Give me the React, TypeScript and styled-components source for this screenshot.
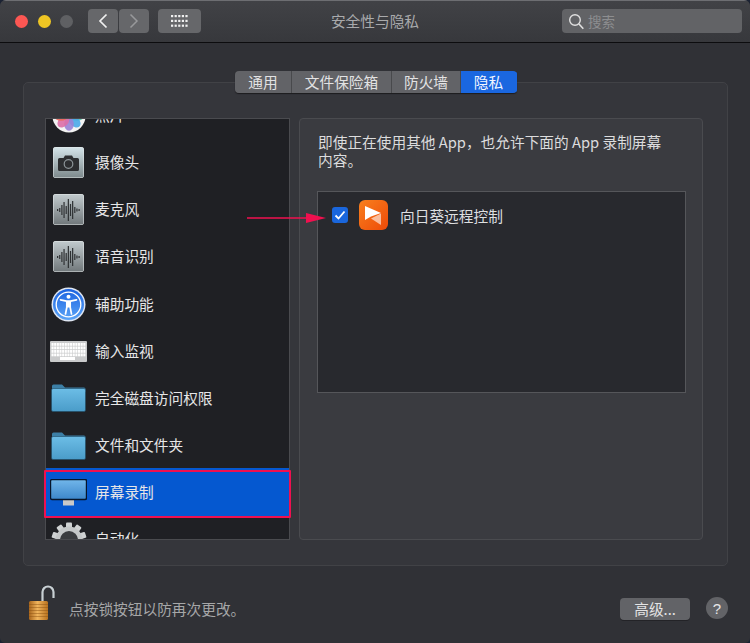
import React from 'react'
import styled, { createGlobalStyle } from 'styled-components'

const GlobalStyle = createGlobalStyle`
  html, body {
    margin: 0;
    background: #1b2233;
  }
  * {
    box-sizing: border-box;
  }
`

const font = `"Noto Sans CJK SC", "Noto Sans", "Liberation Sans", sans-serif`

const CameraIcon = () => (
  <svg width="21" height="16" viewBox="0 0 21 16">
    <path d="M1.5 3h4l1.5-2.500h7L15.500 3h4a1.500 1.500 0 0 1 1.500 1.500V14.500A1.500 1.500 0 0 1 19.500 16h-18A1.500 1.500 0 0 1 0 14.500V4.500A1.500 1.500 0 0 1 1.500 3z" fill="#2c2e30" />
    <circle cx="10.500" cy="9" r="4.300" fill="none" stroke="#8b9497" strokeWidth="1.200" />
  </svg>
)

const WaveIcon = () => {
  const bars = [1, 2, 5, 8, 4, 11, 6, 9, 3, 1.500, 1]
  return (
    <svg width="25" height="24" viewBox="0 0 25 24">
      {bars.map((h, i) => (
        <rect key={i} x={1 + i * 2.150} y={12 - h} width="1.200" height={h * 2} fill="#2e3133" />
      ))}
    </svg>
  )
}

const PhotosIcon = () => {
  const petals = ['#f5c242', '#a6d65a', '#53c6a8', '#4aa8e8', '#9a82d6', '#dd6fa8', '#ec6a5c', '#f39a42']
  return (
    <svg width="34" height="34" viewBox="0 0 34 34">
      <circle cx="17" cy="17" r="16.500" fill="#f3f3f3" />
      {petals.map((c, i) => (
        <ellipse key={c} cx="17" cy="9" rx="4.800" ry="6.800" fill={c} opacity="0.9" transform={`rotate(${i * 45} 17 17)`} />
      ))}
    </svg>
  )
}

const AccessIcon = () => (
  <svg width="35" height="35" viewBox="0 0 35 35">
    <defs>
      <linearGradient id="accessBlue" x1="0" y1="0" x2="0" y2="1">
        <stop offset="0" stopColor="#1c63e0" />
        <stop offset="1" stopColor="#5aa4f7" />
      </linearGradient>
    </defs>
    <circle cx="17.500" cy="17.500" r="17" fill="#dfe6f2" />
    <circle cx="17.500" cy="17.500" r="15.500" fill="url(#accessBlue)" />
    <circle cx="17.500" cy="17.500" r="12.300" fill="none" stroke="#fff" strokeWidth="1.300" />
    <circle cx="17.500" cy="9.800" r="2" fill="#fff" />
    <path d="M9.500 12.800l6 1.300h4l6-1.300M15.800 14v6.500L14.500 27M19.200 14v6.500L20.500 27" fill="none" stroke="#fff" strokeWidth="1.700" strokeLinecap="round" strokeLinejoin="round" />
    <path d="M15.500 14h4v6.500h-4z" fill="#fff" />
  </svg>
)

const KeyboardIcon = () => {
  const keys: React.ReactElement[] = []
  for (let r = 0; r < 4; r++) {
    for (let c = 0; c < 13; c++) {
      keys.push(<rect key={`${r}-${c}`} x={1.500 + c * 2.650} y={2 + r * 3.500} width="2.100" height="2.800" fill="#fff" />)
    }
  }
  return (
    <svg width="37" height="21" viewBox="0 0 37 21">
      <rect x="0" y="0" width="37" height="21" rx="1" fill="#c9cacb" />
      {keys}
      <rect x="10" y="16" width="15" height="3" fill="#fff" />
    </svg>
  )
}

const FolderIcon = () => (
  <svg width="35" height="28" viewBox="0 0 35 28">
    <defs>
      <linearGradient id="folderBlue" x1="0" y1="0" x2="0" y2="1">
        <stop offset="0" stopColor="#6cbde6" />
        <stop offset="1" stopColor="#4a9cc9" />
      </linearGradient>
    </defs>
    <path d="M1 5V2a1.500 1.500 0 0 1 1.500-1.500h8.500L14 3.500h19a1.500 1.500 0 0 1 1.500 1.500v3H1z" fill="#3c7fa6" />
    <rect x="0.500" y="4.500" width="34" height="23" rx="1.500" fill="url(#folderBlue)" stroke="#1f4a63" strokeWidth="0.600" />
  </svg>
)

const MonitorIcon = () => (
  <svg width="37" height="27" viewBox="0 0 37 27">
    <defs>
      <linearGradient id="screenBlue" x1="0" y1="0" x2="0" y2="1">
        <stop offset="0" stopColor="#72b7ea" />
        <stop offset="1" stopColor="#3c86cb" />
      </linearGradient>
    </defs>
    <rect x="13" y="20" width="11" height="6.500" fill="#c9c9c9" />
    <rect x="0.500" y="0.500" width="36" height="20" rx="1.500" fill="url(#screenBlue)" stroke="#07152b" strokeWidth="1.400" />
  </svg>
)

const GearIcon = () => {
  const teeth = [0, 36, 72, 108, 144, 180, 216, 252, 288, 324]
  return (
    <svg width="36" height="36" viewBox="0 0 36 36">
      {teeth.map(a => (
        <rect key={a} x="15" y="0.500" width="6" height="7" rx="1" fill="#cfd2d3" transform={`rotate(${a} 18 18)`} />
      ))}
      <circle cx="18" cy="18" r="13.500" fill="#c4c7c8" />
      <circle cx="18" cy="18" r="9" fill="#3a3c3f" />
    </svg>
  )
}

const LockIcon = () => (
  <svg width="27" height="36" viewBox="0 0 27 36">
    <defs>
      <linearGradient id="lockBrass" x1="0" y1="0" x2="1" y2="0">
        <stop offset="0" stopColor="#a8651c" />
        <stop offset="0.450" stopColor="#f0b45c" />
        <stop offset="1" stopColor="#b9721f" />
      </linearGradient>
    </defs>
    <path d="M14.500 17V7a5.500 5.500 0 0 1 11 0v6" fill="none" stroke="#c8d0d4" strokeWidth="2.200" />
    <rect x="1" y="16" width="19" height="19" rx="1.500" fill="url(#lockBrass)" />
    {[19, 22, 25, 28, 31].map(y => (
      <rect key={y} x="1" y={y} width="19" height="0.800" fill="#8f5414" opacity="0.6" />
    ))}
  </svg>
)

const Window = styled.div`
  position: relative;
  width: 750px;
  height: 643px;
  display: flex;
  flex-direction: column;
  overflow: hidden;
  border-radius: 6px 6px 5px 5px;
  background: #303136;
  font-family: ${font};
`

const TitleBar = styled.header`
  height: 43px;
  flex: none;
  display: grid;
  grid-template-columns: 1fr auto 1fr;
  align-items: center;
  padding: 0 8px 1px;
  background: linear-gradient(#414246, #37383c);
  border-top: 1px solid #6d6e72;
  border-bottom: 1px solid #0c0c0e;
`

const LeftTools = styled.div`
  display: flex;
  align-items: center;
  padding-left: 7px;
`

const Light = styled.span<{ $color: string }>`
  width: 13px;
  height: 13px;
  margin-right: 9.500px;
  border-radius: 50%;
  background: ${p => p.$color};
`

const ToolButton = styled.button<{ $width: number; $left?: number }>`
  width: ${p => p.$width}px;
  height: 24px;
  margin-left: ${p => p.$left ?? 0}px;
  padding: 0;
  display: flex;
  align-items: center;
  justify-content: center;
  border: 0;
  border-radius: 4px;
  background: #66676a;
`

const Title = styled.h1`
  margin: 0 0 1px;
  font-size: 14.700px;
  font-weight: 400;
  color: #a9aaac;
`

const Search = styled.div`
  justify-self: end;
  width: 180px;
  height: 24px;
  display: flex;
  align-items: center;
  gap: 4px;
  padding-left: 6px;
  border-radius: 4px;
  background: #626366;
  font-size: 13.500px;
  color: #8d8e90;
`

const Body = styled.main`
  flex: 1;
  display: flex;
  flex-direction: column;
  padding: 28px 22px 0 23px;
`

const Tabs = styled.nav`
  position: relative;
  z-index: 1;
  align-self: center;
  display: flex;
  height: 22px;
  margin: 0 0 -11px 1px;
  border-radius: 4px;
  overflow: hidden;
  box-shadow: 0 1px 1px #1c1c1f;
`

const Tab = styled.div<{ $width: number; $active?: boolean }>`
  width: ${p => p.$width}px;
  display: flex;
  align-items: center;
  justify-content: center;
  padding-bottom: 1px;
  font-size: 14.700px;
  color: ${p => (p.$active ? '#f2f6ff' : '#e2e2e3')};
  background: ${p => (p.$active ? '#1a67e0' : '#626367')};
  border-right: 1px solid ${p => (p.$active ? '#1a67e0' : '#48494c')};
`

const Panel = styled.section`
  height: 484px;
  display: flex;
  gap: 9px;
  padding: 35px 24px 25px 21px;
  border: 1px solid #414246;
  border-radius: 5px;
  background: #35363b;
`

const ListFrame = styled.div`
  position: relative;
  width: 245px;
  border: 1px solid #4a4b4f;
  background: #1f2024;
`

const ListScroll = styled.div`
  height: 100%;
  overflow: hidden;
`

const Rows = styled.ul`
  list-style: none;
  margin: -28px 0 0;
  padding: 0;
`

const Row = styled.li<{ $selected?: boolean }>`
  height: 47.150px;
  display: flex;
  align-items: center;
  gap: 7.500px;
  padding-left: 3.500px;
  font-size: 14.700px;
  color: #e6e6e7;
  background: ${p => (p.$selected ? '#0558d0' : 'transparent')};
  box-shadow: ${p => (p.$selected ? '0 2px 0 #0558d0' : 'none')};
`

const IconSlot = styled.span`
  width: 38px;
  margin-top: 2px;
  display: flex;
  justify-content: center;
`

const Tile = styled.span<{ $top: string; $bottom: string }>`
  width: 31px;
  height: 31px;
  display: flex;
  align-items: center;
  justify-content: center;
  border-radius: 3px;
  background: linear-gradient(${p => p.$top}, ${p => p.$bottom});
  box-shadow: inset 0 0 0 0.500px #e5e9ea;
`

const Highlight = styled.div`
  position: absolute;
  left: -2px;
  right: -2px;
  top: 351px;
  height: 48px;
  border: 2px solid #f0104f;
  border-radius: 1px;
`

const Detail = styled.div`
  width: 404px;
  padding: 14px 16px 0 17px;
  border: 1px solid #4a4b4f;
  border-radius: 4px;
  background: #3a3b40;
`

const Description = styled.p`
  margin: 0 0 22px 1px;
  width: 350px;
  font-size: 14.700px;
  line-height: 18px;
  color: #dcdcdd;
`

const AppTable = styled.div`
  height: 202px;
  padding: 8px 14px;
  border: 1px solid #55565a;
  background: #28292e;
`

const AppRow = styled.div`
  display: flex;
  align-items: center;
  height: 30px;
  font-size: 14.700px;
  color: #dedfe0;
`

const Check = styled.span`
  width: 16px;
  height: 16px;
  margin-right: 11px;
  display: flex;
  align-items: center;
  justify-content: center;
  border-radius: 3px;
  background: #1a66dc;
`

const AppIcon = styled.span`
  width: 29px;
  height: 30px;
  margin-right: 12px;
  display: flex;
  align-items: center;
  justify-content: center;
  border-radius: 6px;
  background: linear-gradient(135deg, #f8801e, #ee4a08);
`

const Arrow = styled.svg`
  position: absolute;
  left: 246px;
  top: 210px;
`

const Footer = styled.footer`
  flex: 1;
  display: flex;
  align-items: flex-start;
  padding: 19px 0 0 5px;
`

const LockText = styled.span`
  margin: 14px auto 0 14px;
  font-size: 14.700px;
  line-height: 20px;
  color: #a6a7a8;
`

const Advanced = styled.button`
  width: 70px;
  height: 22px;
  margin-top: 13px;
  padding: 0;
  border: 0;
  border-radius: 4px;
  background: #626367;
  box-shadow: 0 1px 0 #232327;
  font-family: ${font};
  font-size: 14.700px;
  line-height: 20px;
  color: #e4e4e5;
`

const Help = styled.button`
  width: 22px;
  height: 22px;
  margin: 12px 0 0 16px;
  padding: 0;
  border: 0;
  border-radius: 50%;
  background: #626367;
  font-family: "Liberation Sans", sans-serif;
  font-size: 15px;
  color: #e6e6e7;
`

const items: { label: string; icon: React.ReactNode; selected?: boolean }[] = [
  { label: '照片', icon: <PhotosIcon /> },
  { label: '摄像头', icon: <Tile $top="#d5e5ea" $bottom="#7c888b"><CameraIcon /></Tile> },
  { label: '麦克风', icon: <Tile $top="#c2cbce" $bottom="#70777a"><WaveIcon /></Tile> },
  { label: '语音识别', icon: <Tile $top="#c2cbce" $bottom="#70777a"><WaveIcon /></Tile> },
  { label: '辅助功能', icon: <AccessIcon /> },
  { label: '输入监视', icon: <KeyboardIcon /> },
  { label: '完全磁盘访问权限', icon: <FolderIcon /> },
  { label: '文件和文件夹', icon: <FolderIcon /> },
  { label: '屏幕录制', icon: <MonitorIcon />, selected: true },
  { label: '自动化', icon: <GearIcon /> },
]

const App: React.FC = (): JSX.Element => {
  return (
    <Window>
      <GlobalStyle />
      <TitleBar>
        <LeftTools>
          <Light $color="#fc5753" />
          <Light $color="#eec524" />
          <Light $color="#5f6063" />
          <ToolButton $width={30} $left={5.500}>
            <svg width="10" height="16" viewBox="0 0 10 16">
              <path d="M8.500 1.500L2 8l6.500 6.500" fill="none" stroke="#f0f0f0" strokeWidth="1.700" />
            </svg>
          </ToolButton>
          <ToolButton $width={30} $left={1}>
            <svg width="10" height="16" viewBox="0 0 10 16">
              <path d="M1.500 1.500L8 8l-6.500 6.500" fill="none" stroke="#98999b" strokeWidth="1.500" />
            </svg>
          </ToolButton>
          <ToolButton $width={43} $left={9}>
            <svg width="17" height="13" viewBox="0 0 17 13">
              {[0, 1, 2].flatMap(r =>
                [0, 1, 2, 3, 4].map(c => (
                  <rect key={`${r}${c}`} x={c * 3.600} y={r * 4.800} width="2.200" height="2.200" fill="#f0f0f0" />
                )),
              )}
            </svg>
          </ToolButton>
        </LeftTools>
        <Title>安全性与隐私</Title>
        <Search>
          <svg width="16" height="17" viewBox="0 0 16 17">
            <circle cx="7" cy="7" r="5.300" fill="none" stroke="#e0e0e0" strokeWidth="1.400" />
            <path d="M11 11l4.300 4.800" stroke="#e0e0e0" strokeWidth="1.600" />
          </svg>
          搜索
        </Search>
      </TitleBar>
      <Body>
        <Tabs>
          <Tab $width={57}>通用</Tab>
          <Tab $width={100}>文件保险箱</Tab>
          <Tab $width={69}>防火墙</Tab>
          <Tab $width={56} $active>隐私</Tab>
        </Tabs>
        <Panel>
          <ListFrame>
            <ListScroll>
              <Rows>
                {items.map(item => (
                  <Row key={item.label} $selected={item.selected}>
                    <IconSlot>{item.icon}</IconSlot>
                    {item.label}
                  </Row>
                ))}
              </Rows>
            </ListScroll>
            <Highlight />
          </ListFrame>
          <Detail>
            <Description>即使正在使用其他 App，也允许下面的 App 录制屏幕内容。</Description>
            <AppTable>
              <AppRow>
                <Check>
                  <svg width="12" height="10" viewBox="0 0 12 10">
                    <path d="M1.500 5.500L4.500 8.500L10.500 1.500" fill="none" stroke="#fff" strokeWidth="1.800" />
                  </svg>
                </Check>
                <AppIcon>
                  <svg width="19" height="21" viewBox="0 0 19 21">
                    <path d="M1 1L17 8L7 11.500L1 15z" fill="#fff" />
                    <path d="M17 8.500V20L7 13.500z" fill="#fff" opacity="0.6" />
                  </svg>
                </AppIcon>
                向日葵远程控制
              </AppRow>
            </AppTable>
          </Detail>
        </Panel>
        <Footer>
          <LockIcon />
          <LockText>点按锁按钮以防再次更改。</LockText>
          <Advanced>高级...</Advanced>
          <Help>?</Help>
        </Footer>
      </Body>
      <Arrow width="82" height="16" viewBox="0 0 82 16">
        <path d="M1 8H62" stroke="#f0104f" strokeWidth="1.500" />
        <path d="M60 3L80 8L60 13z" fill="#f0104f" />
      </Arrow>
    </Window>
  )
}

export default App
